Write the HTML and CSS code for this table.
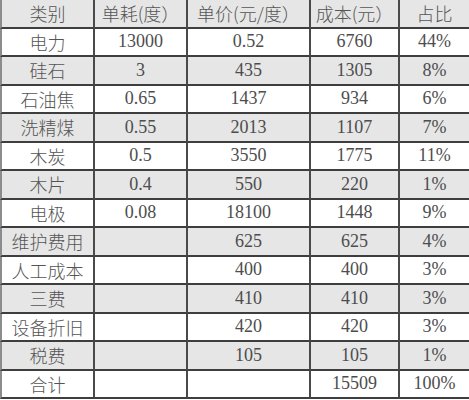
FILE: index.html
```html
<!DOCTYPE html>
<html lang="zh-CN">
<head>
<meta charset="utf-8">
<title>成本构成</title>
<link rel="stylesheet" href="styles.css">
</head>
<body>
<div class="sheet">
  <div class="row head"><span class="cn">类别</span><span class="cn">单耗(度）</span><span class="cn">单价(元/度）</span><span class="cn">成本(元）</span><span class="cn">占比</span></div>
  <div class="row"><span class="cn">电力</span><span>13000</span><span>0.52</span><span>6760</span><span>44%</span></div>
  <div class="row alt"><span class="cn">硅石</span><span>3</span><span>435</span><span>1305</span><span>8%</span></div>
  <div class="row"><span class="cn">石油焦</span><span>0.65</span><span>1437</span><span>934</span><span>6%</span></div>
  <div class="row alt"><span class="cn">洗精煤</span><span>0.55</span><span>2013</span><span>1107</span><span>7%</span></div>
  <div class="row"><span class="cn">木炭</span><span>0.5</span><span>3550</span><span>1775</span><span>11%</span></div>
  <div class="row alt"><span class="cn">木片</span><span>0.4</span><span>550</span><span>220</span><span>1%</span></div>
  <div class="row"><span class="cn">电极</span><span>0.08</span><span>18100</span><span>1448</span><span>9%</span></div>
  <div class="row alt"><span class="cn">维护费用</span><span></span><span>625</span><span>625</span><span>4%</span></div>
  <div class="row"><span class="cn">人工成本</span><span></span><span>400</span><span>400</span><span>3%</span></div>
  <div class="row alt"><span class="cn">三费</span><span></span><span>410</span><span>410</span><span>3%</span></div>
  <div class="row"><span class="cn">设备折旧</span><span></span><span>420</span><span>420</span><span>3%</span></div>
  <div class="row alt"><span class="cn">税费</span><span></span><span>105</span><span>105</span><span>1%</span></div>
  <div class="row"><span class="cn">合计</span><span></span><span></span><span>15509</span><span>100%</span></div>
</div>
</body>
</html>
```
FILE: styles.css
```css
html, body {
  margin: 0;
  padding: 0;
  background: #ffffff;
}

.sheet {
  width: 469px;
  display: grid;
  grid-template-columns: 95px 93px 123px 89px 69px;
  grid-auto-rows: 28.5px;
  color: #4d4d4d;
  font-family: "Liberation Serif", "Noto Sans CJK SC", serif;
  font-size: 18px;
}

.row {
  display: contents;
}

.row > span {
  box-sizing: border-box;
  display: flex;
  align-items: center;
  justify-content: center;
  background: #ffffff;
  border-right: 2px solid #4a4a4a;
  border-bottom: 2px solid #3e3e3e;
  white-space: nowrap;
  overflow: hidden;
}

.row > span:first-child {
  border-left: 2px solid #8c8c8c;
}

.row > span:last-child {
  border-right: none;
}

.head > span,
.alt > span {
  background: #e6e6e6;
}

.cn {
  font-family: "Noto Sans CJK SC", sans-serif;
  font-weight: 300;
  font-size: 18px;
  color: #555555;
}
```
